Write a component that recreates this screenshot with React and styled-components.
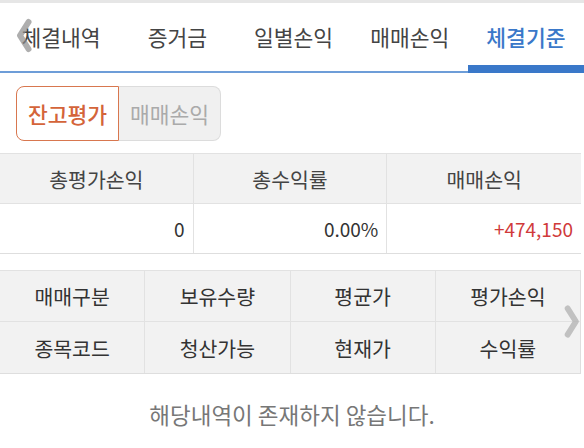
import React from "react";
import styled, { createGlobalStyle } from "styled-components";

const Global = createGlobalStyle`
  html, body { margin: 0; padding: 0; background: #fff; }
  body { font-family: "Noto Sans CJK KR", "Noto Sans", sans-serif; width: 584px; overflow: hidden; }
  * { box-sizing: border-box; }
`;

const Page = styled.div`
  width: 584px;
  height: 448px;
  display: flex;
  flex-direction: column;
  background: #fff;
`;

const TopStrip = styled.div`
  height: 3px;
  background: #e6e6e6;
`;

const TabBar = styled.div`
  position: relative;
  height: 70px;
  display: flex;
  padding-left: 3px;
  border-bottom: 2px solid #6d9dd8;
`;

const Tab = styled.div`
  position: relative;
  flex: 1;
  display: flex;
  align-items: center;
  justify-content: center;
  padding-bottom: 1px;
  font-size: 21.5px;
  color: ${(p) => (p.$active ? "#3a78c9" : "#444")};
  font-weight: ${(p) => (p.$active ? 500 : 400)};
  white-space: nowrap;
  &::after {
    content: "";
    display: ${(p) => (p.$active ? "block" : "none")};
    position: absolute;
    left: 0;
    right: 0;
    bottom: -2px;
    height: 8px;
    background: #3a78c9;
  }
`;

const Chevron = styled.svg`
  position: absolute;
  left: ${(p) => p.$left}px;
  top: ${(p) => p.$top}px;
`;

const SegmentRow = styled.div`
  display: flex;
  padding: 13px 16px 12px;
`;

const Segment = styled.div`
  width: ${(p) => p.$w}px;
  height: 55px;
  display: flex;
  align-items: center;
  justify-content: center;
  font-size: 21.5px;
  font-weight: ${(p) => (p.$active ? 500 : 400)};
  color: ${(p) => (p.$active ? "#d4643a" : "#aaa")};
  background: ${(p) => (p.$active ? "#fff" : "#f0f0f0")};
  border: 1px solid ${(p) => (p.$active ? "#d8774f" : "#dcdcdc")};
  border-radius: ${(p) => (p.$active ? "8px 0 0 8px" : "0 8px 8px 0")};
  ${(p) => (p.$active ? "" : "border-left: none;")}
`;

const Table = styled.div`
  width: 581px;
  display: grid;
  grid-template-columns: repeat(${(p) => p.$cols}, 1fr);
  border-top: 1px solid #e2e2e2;
  border-bottom: 1px solid #dedede;
`;

const Cell = styled.div`
  height: ${(p) => p.$h}px;
  display: flex;
  align-items: center;
  justify-content: ${(p) => (p.$right ? "flex-end" : "center")};
  padding: 0 8px;
  font-size: ${(p) => (p.$right ? 19 : 20.5)}px;
  color: ${(p) => p.$color || "#444"};
  background: ${(p) => (p.$head ? "#f2f2f2" : "#fff")};
  border-right: 1px solid #e2e2e2;
  border-bottom: ${(p) => (p.$line ? "1px solid #e2e2e2" : "none")};
  &:nth-child(${(p) => p.$cols}n) {
    border-right: ${(p) => (p.$edge ? "1px solid #dedede" : "none")};
  }
`;

const Gap = styled.div`
  height: ${(p) => p.$h}px;
`;

const GridWrap = styled.div`
  position: relative;
`;

const Empty = styled.div`
  padding-top: 24px;
  text-align: center;
  font-size: 22.5px;
  color: #777;
`;

const ChevronIcon = ({ dir, left, top, w, h, color, sw }) => (
  <Chevron $left={left} $top={top} width={w} height={h} viewBox="0 0 16 34">
    <polyline
      points={dir === "left" ? "12.5,3.5 4,17 12.5,30.5" : "3.5,3.5 12,17 3.5,30.5"}
      fill="none"
      stroke={color}
      strokeWidth={sw}
      strokeLinecap="round"
      strokeLinejoin="round"
    />
  </Chevron>
);

const tabs = ["체결내역", "증거금", "일별손익", "매매손익", "체결기준"];
const summaryHead = ["총평가손익", "총수익률", "매매손익"];
const summaryVals = [
  { v: "0" },
  { v: "0.00%" },
  { v: "+474,150", c: "#d03a3a" },
];
const gridRows = [
  ["매매구분", "보유수량", "평균가", "평가손익"],
  ["종목코드", "청산가능", "현재가", "수익률"],
];

export default function App() {
  return (
    <Page>
      <Global />
      <TopStrip />
      <TabBar>
        {tabs.map((t, i) => (
          <Tab key={t} $active={i === 4}>
            {t}
          </Tab>
        ))}
        <ChevronIcon dir="left" left={16} top={15} w={16} h={35} sw={6} color="rgba(140,140,140,0.7)" />
      </TabBar>
      <SegmentRow>
        <Segment $active $w={103}>잔고평가</Segment>
        <Segment $w={102}>매매손익</Segment>
      </SegmentRow>
      <Table $cols={3}>
        {summaryHead.map((h) => (
          <Cell key={h} $cols={3} $h={50} $head $line>
            {h}
          </Cell>
        ))}
        {summaryVals.map((s) => (
          <Cell key={s.v} $cols={3} $h={49} $right $color={s.c || "#333"}>
            {s.v}
          </Cell>
        ))}
      </Table>
      <Gap $h={16} />
      <GridWrap>
        <Table $cols={4}>
          {gridRows.map((row, r) =>
            row.map((c) => (
              <Cell key={c} $cols={4} $h={51} $head $line={r === 0} $edge $color="#333">
                {c}
              </Cell>
            ))
          )}
        </Table>
        <ChevronIcon dir="right" left={564} top={35} w={16} h={33} sw={6} color="rgba(180,180,180,0.8)" />
      </GridWrap>
      <Empty>해당내역이 존재하지 않습니다.</Empty>
    </Page>
  );
}
